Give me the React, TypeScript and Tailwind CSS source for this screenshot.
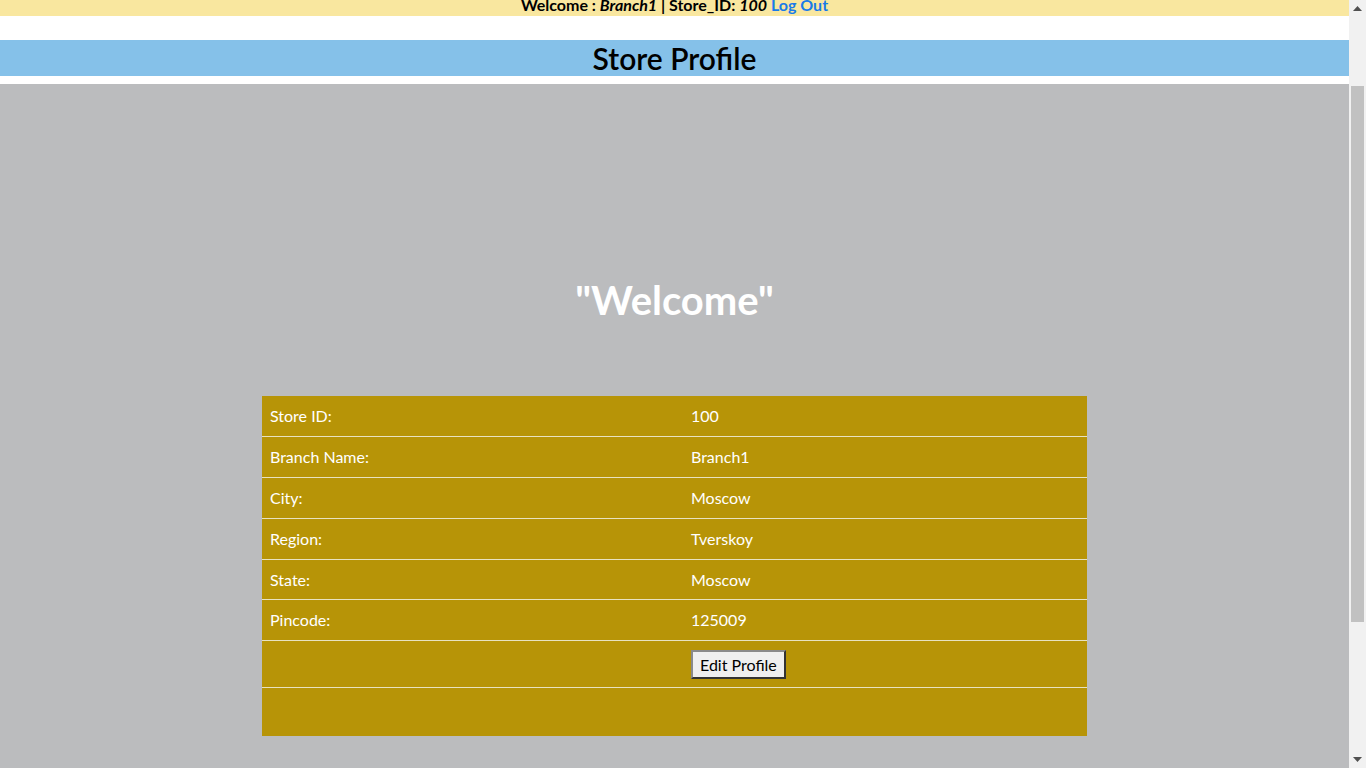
const rows: [string, string][] = [
  ['Store ID:', '100'],
  ['Branch Name:', 'Branch1'],
  ['City:', 'Moscow'],
  ['Region:', 'Tverskoy'],
  ['State:', 'Moscow'],
  ['Pincode:', '125009'],
];

function Scrollbar() {
  return (
    <aside className="flex w-[17px] shrink-0 flex-col bg-[#f1f1f1]">
      <div className="flex h-[17px] items-center justify-center">
        <svg width="9" height="5" viewBox="0 0 9 5">
          <path d="M0 5 L4.5 0 L9 5 Z" fill="#505050" />
        </svg>
      </div>
      <div className="flex-1 px-[2px]">
        <div className="mt-[69px] h-[536px] bg-[#c1c1c1]" />
      </div>
      <div className="flex h-[17px] items-center justify-center">
        <svg width="9" height="5" viewBox="0 0 9 5">
          <path d="M0 0 L4.5 5 L9 0 Z" fill="#505050" />
        </svg>
      </div>
    </aside>
  );
}

export default function App() {
  return (
    <div className="flex h-screen overflow-hidden bg-white font-['Lato','Liberation_Sans',sans-serif] text-black">
      <div className="min-w-0 flex-1">
        {/* top welcome strip */}
        <div className="h-4 overflow-hidden bg-[#f9e79f] text-center">
          <p className="-mt-[5px] text-base font-bold leading-5">
            Welcome : <i>Branch1</i> | Store_ID: <i>100</i>{' '}
            <a href="#" className="text-[#1a7be8]">
              Log Out
            </a>
          </p>
        </div>

        <div className="mt-6 bg-[#85c1e9] text-center">
          <h1 className="text-[30px] font-semibold leading-9">Store Profile</h1>
        </div>

        <main className="mt-2 min-h-[968px] bg-[#bbbcbe] pt-[192px]">
          <h2 className="text-center text-[40px] font-bold leading-[48px] text-white">"Welcome"</h2>

          <table className="mx-auto mt-[72px] w-[825px] border-collapse bg-[#b79407] text-base text-white">
            <tbody>
              {rows.map(([label, value], i) => (
                <tr key={label} className={i === 0 ? '' : 'border-t border-[#e8e2c0]'}>
                  <td className={`w-[421px] px-2 leading-5 ${i === 4 ? 'py-[9.5px]' : 'py-[10px]'}`}>{label}</td>
                  <td className="px-2 leading-5">{value}</td>
                </tr>
              ))}
              <tr className="border-t border-[#e8e2c0]">
                <td className="px-2" />
                <td className="px-2 pt-[9px] pb-[8px]">
                  <button className="h-[29px] border-2 border-t-[#8a8a8a] border-l-[#8a8a8a] border-r-[#333] border-b-[#333] bg-[#efefef] px-[7px] text-base leading-5 text-black">
                    Edit Profile
                  </button>
                </td>
              </tr>
              <tr className="border-t border-[#e8e2c0]">
                <td className="h-12" />
                <td className="h-12" />
              </tr>
            </tbody>
          </table>
        </main>
      </div>
      <Scrollbar />
    </div>
  );
}
